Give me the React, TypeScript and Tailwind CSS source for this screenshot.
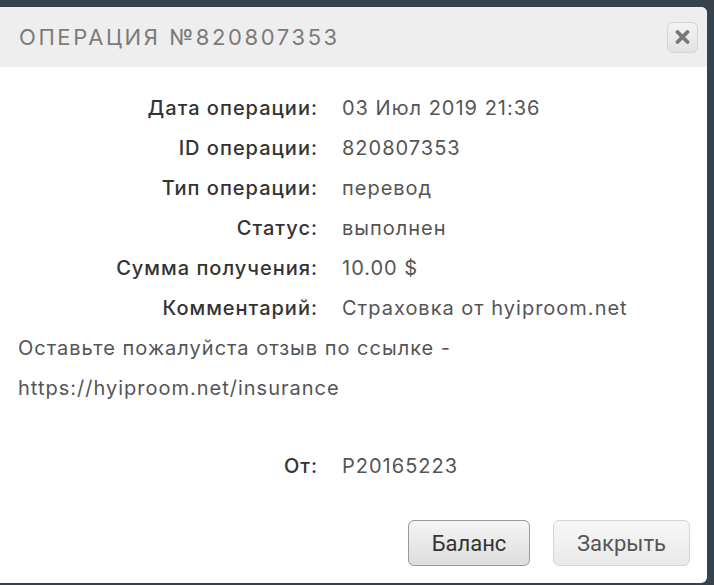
import React from "react";

const rows = [
    { label: "Дата операции:", value: "03 Июл 2019 21:36" },
    { label: "ID операции:", value: "820807353" },
    { label: "Тип операции:", value: "перевод" },
    { label: "Статус:", value: "выполнен" },
    { label: "Сумма получения:", value: "10.00 $" },
    { label: "Комментарий:", value: "Страховка от hyiproom.net" },
];

const Row: React.FC<{ label: string; value: string }> = ({ label, value }) => (
    <div className="flex h-[40px] items-center">
        <div className="w-[318px] shrink-0 text-right font-medium text-[#333]">{label}</div>
        <div className="pl-[24px] text-[#555]">{value}</div>
    </div>
);

const App: React.FC = () => {
    return (
        <div className="min-h-screen bg-[#37434c] pt-[7px] pr-[7px]">
            <div
                className="bg-white rounded-r-[6px] h-[576px] flex flex-col overflow-hidden"
                style={{ fontFamily: "Inter, 'Noto Sans', sans-serif" }}
            >
                {/* header */}
                <div className="h-[60px] shrink-0 bg-[#eeeeee] flex items-center justify-between pl-[19px] pr-[9px]">
                    <h3 className="text-[22px] tracking-[2.6px] text-[#7b7b7b] uppercase">
                        Операция №820807353
                    </h3>
                    <button className="w-[31px] h-[31px] rounded-[6px] border border-[#d4d4d4] bg-gradient-to-b from-[#f3f3f3] to-[#e3e3e3] flex items-center justify-center">
                        <svg width="15" height="14" viewBox="0 0 15 14">
                            <path d="M2.5 2 L12.5 12 M12.5 2 L2.5 12" stroke="#787878" strokeWidth="3.8" strokeLinecap="round" />
                        </svg>
                    </button>
                </div>

                {/* body */}
                <div className="pt-[21px] text-[20px] leading-[40px] tracking-[1px]">
                    {rows.map((r) => (
                        <Row key={r.label} label={r.label} value={r.value} />
                    ))}
                    <div className="pl-[18px] text-[#555]">
                        Оставьте пожалуйста отзыв по ссылке -
                        <br />
                        https://hyiproom.net/insurance
                    </div>
                    <div className="h-[38px]" />
                    <Row label="От:" value="P20165223" />
                </div>

                {/* footer */}
                <div className="flex justify-end gap-[23px] pr-[17px] mt-[34px]">
                    <button
                        className="w-[122px] h-[46px] rounded-[6px] border border-[#9a9a9a] bg-gradient-to-b from-[#f5f5f5] to-[#dddddd] text-[22px] text-[#333]"
                        style={{ fontFamily: "Roboto, sans-serif" }}
                    >
                        Баланс
                    </button>
                    <button
                        className="w-[137px] h-[46px] rounded-[6px] border border-[#d5d5d5] bg-gradient-to-b from-[#f7f7f7] to-[#e9e9e9] text-[22px] text-[#555]"
                        style={{ fontFamily: "Roboto, sans-serif" }}
                    >
                        Закрыть
                    </button>
                </div>
            </div>
        </div>
    );
};

export default App;
